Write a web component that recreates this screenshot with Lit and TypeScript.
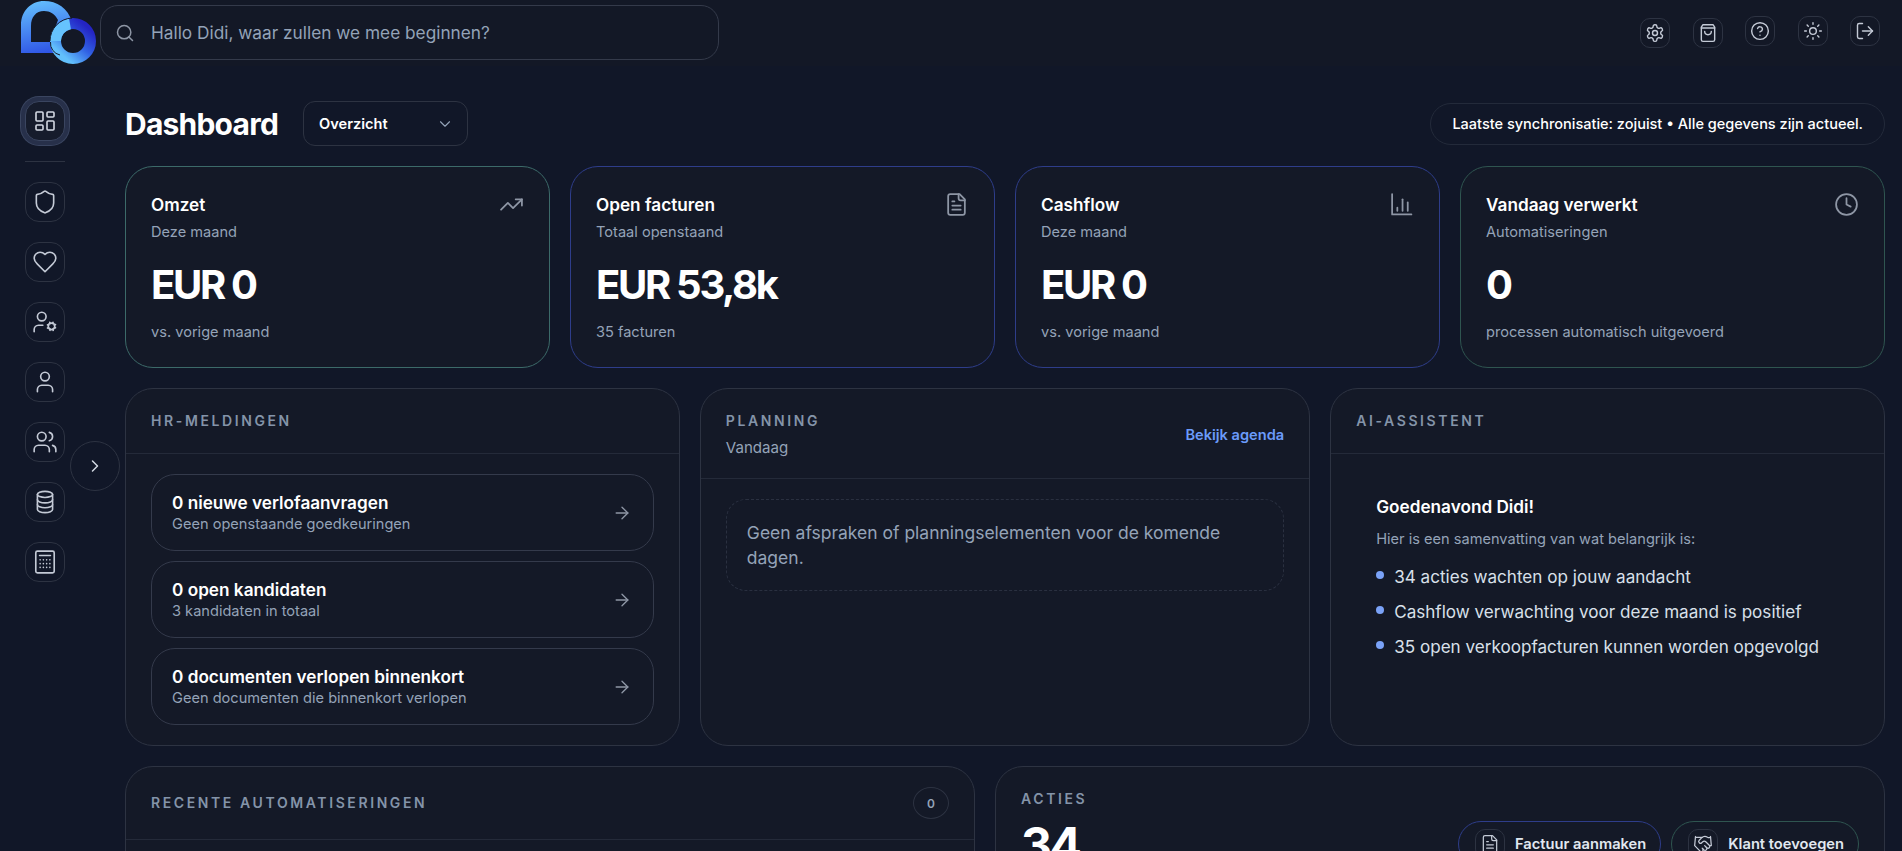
import { LitElement, css, html, svg } from "lit";
import { customElement } from "lit/decorators.js";

const icon = (body: unknown, size = 20, stroke = 2) => html`<svg
  width=${size}
  height=${size}
  viewBox="0 0 24 24"
  fill="none"
  stroke="currentColor"
  stroke-width=${stroke}
  stroke-linecap="round"
  stroke-linejoin="round"
>${body}</svg>`;

const I = {
  search: svg`<circle cx="11" cy="11" r="8"/><path d="m21 21-4.3-4.3"/>`,
  chevronDown: svg`<path d="m6 9 6 6 6-6"/>`,
  chevronRight: svg`<path d="m9 18 6-6-6-6"/>`,
  arrowRight: svg`<path d="M5 12h14"/><path d="m12 5 7 7-7 7"/>`,
  gear: svg`<path d="M12.22 2h-.44a2 2 0 0 0-2 2v.18a2 2 0 0 1-1 1.73l-.43.25a2 2 0 0 1-2 0l-.15-.08a2 2 0 0 0-2.73.73l-.22.38a2 2 0 0 0 .73 2.73l.15.1a2 2 0 0 1 1 1.72v.51a2 2 0 0 1-1 1.74l-.15.09a2 2 0 0 0-.73 2.73l.22.38a2 2 0 0 0 2.73.73l.15-.08a2 2 0 0 1 2 0l.43.25a2 2 0 0 1 1 1.73V20a2 2 0 0 0 2 2h.44a2 2 0 0 0 2-2v-.18a2 2 0 0 1 1-1.73l.43-.25a2 2 0 0 1 2 0l.15.08a2 2 0 0 0 2.73-.73l.22-.39a2 2 0 0 0-.73-2.73l-.15-.08a2 2 0 0 1-1-1.74v-.5a2 2 0 0 1 1-1.74l.15-.09a2 2 0 0 0 .73-2.73l-.22-.38a2 2 0 0 0-2.73-.73l-.15.08a2 2 0 0 1-2 0l-.43-.25a2 2 0 0 1-1-1.73V4a2 2 0 0 0-2-2z"/><circle cx="12" cy="12" r="3"/>`,
  bag: svg`<path d="M6 2 4 5v15a2 2 0 0 0 2 2h12a2 2 0 0 0 2-2V5l-2-3Z"/><path d="M4 6h16"/><path d="M16 10a4 4 0 0 1-8 0"/>`,
  help: svg`<circle cx="12" cy="12" r="10"/><path d="M9.09 9a3 3 0 0 1 5.83 1c0 2-3 3-3 3"/><path d="M12 17h.01"/>`,
  sun: svg`<circle cx="12" cy="12" r="4"/><path d="M12 2v2"/><path d="M12 20v2"/><path d="m4.93 4.93 1.41 1.41"/><path d="m17.66 17.66 1.41 1.41"/><path d="M2 12h2"/><path d="M20 12h2"/><path d="m6.34 17.66-1.41 1.41"/><path d="m19.07 4.93-1.41 1.41"/>`,
  logout: svg`<path d="M9 21H5a2 2 0 0 1-2-2V5a2 2 0 0 1 2-2h4"/><path d="m16 17 5-5-5-5"/><path d="M21 12H9"/>`,
  dashboard: svg`<rect x="3" y="3" width="7" height="9" rx="1"/><rect x="14" y="3" width="7" height="5" rx="1"/><rect x="14" y="12" width="7" height="9" rx="1"/><rect x="3" y="16" width="7" height="5" rx="1"/>`,
  shield: svg`<path d="M20 13c0 5-3.500 7.500-7.660 8.950a1 1 0 0 1-.67-.01C7.500 20.500 4 18 4 13V6a1 1 0 0 1 1-1c2 0 4.500-1.200 6.240-2.720a1.170 1.170 0 0 1 1.520 0C14.510 3.810 17 5 19 5a1 1 0 0 1 1 1z"/>`,
  heart: svg`<path d="M19 14c1.490-1.460 3-3.210 3-5.500A5.500 5.500 0 0 0 16.500 3c-1.760 0-3 .5-4.500 2-1.500-1.500-2.740-2-4.500-2A5.500 5.500 0 0 0 2 8.500c0 2.300 1.500 4.050 3 5.500l7 7Z"/>`,
  userCog: svg`<path d="M2 21v-2a4 4 0 0 1 4-4h4"/><circle cx="9" cy="7" r="4"/><circle cx="18" cy="16" r="3"/><path d="m21.700 17.400-.9-.3"/><path d="m15.200 14.900-.9-.3"/><path d="m16.600 19.700.3-.9"/><path d="m19.100 13.200.3-.9"/><path d="m19.600 19.700-.4-1"/><path d="m16.800 13.300-.4-1"/><path d="m14.300 17.600 1-.4"/><path d="m20.700 14.800 1-.4"/>`,
  user: svg`<path d="M19 21v-2a4 4 0 0 0-4-4H9a4 4 0 0 0-4 4v2"/><circle cx="12" cy="7" r="4"/>`,
  users: svg`<path d="M16 21v-2a4 4 0 0 0-4-4H6a4 4 0 0 0-4 4v2"/><circle cx="9" cy="7" r="4"/><path d="M22 21v-2a4 4 0 0 0-3-3.870"/><path d="M16 3.130a4 4 0 0 1 0 7.750"/>`,
  database: svg`<ellipse cx="12" cy="5" rx="7" ry="2.800"/><path d="M5 5v14c0 1.500 3.100 2.800 7 2.800s7-1.300 7-2.800V5"/><path d="M5 10c0 1.500 3.100 2.800 7 2.800s7-1.300 7-2.800"/><path d="M5 14.500c0 1.500 3.100 2.800 7 2.800s7-1.300 7-2.800"/>`,
  calculator: svg`<rect x="3.500" y="2" width="17" height="20" rx="1.500"/><path d="M7 6h10"/><path d="M7.500 10h.01M10.500 10h.01M13.500 10h.01M16.500 10h.01M7.500 13.500h.01M10.500 13.500h.01M13.500 13.500h.01M16.500 13.500h.01M7.500 17h.01M10.500 17h.01M13.500 17h.01M16.500 17h.01"/>`,
  trending: svg`<path d="M22 7l-8.500 8.500-5-5L2 17"/><path d="M16 7h6v6"/>`,
  file: svg`<path d="M15 2H6a2 2 0 0 0-2 2v16a2 2 0 0 0 2 2h12a2 2 0 0 0 2-2V7Z"/><path d="M14 2v4a2 2 0 0 0 2 2h4"/><path d="M10 9H8"/><path d="M16 13H8"/><path d="M16 17H8"/>`,
  chart: svg`<path d="M3 2v19.500h18.500"/><path d="M8 18v-3"/><path d="M13 18V7"/><path d="M18 18v-8"/>`,
  clock: svg`<circle cx="12" cy="12" r="10"/><path d="M12 6v6l4 2"/>`,
  handshake: svg`<path d="m11 17 2 2a1 1 0 1 0 3-3"/><path d="m14 14 2.500 2.500a1 1 0 1 0 3-3l-3.880-3.880a3 3 0 0 0-4.240 0l-.88.88a1 1 0 1 1-3-3l2.810-2.810a5.790 5.790 0 0 1 7.060-.87l.47.28a2 2 0 0 0 1.420.25L21 4"/><path d="m21 3 1 11h-2"/><path d="M3 3 2 14l6.500 6.500a1 1 0 1 0 3-3"/><path d="M3 4h8"/>`,
};

const kpis = [
  { title: "Omzet", sub: "Deze maand", value: "EUR 0", foot: "vs. vorige maand", tone: "teal", icon: I.trending },
  { title: "Open facturen", sub: "Totaal openstaand", value: "EUR 53,8k", foot: "35 facturen", tone: "blue", icon: I.file },
  { title: "Cashflow", sub: "Deze maand", value: "EUR 0", foot: "vs. vorige maand", tone: "blue", icon: I.chart },
  { title: "Vandaag verwerkt", sub: "Automatiseringen", value: "0", foot: "processen automatisch uitgevoerd", tone: "green", icon: I.clock },
];

const hrItems = [
  { title: "0 nieuwe verlofaanvragen", sub: "Geen openstaande goedkeuringen" },
  { title: "0 open kandidaten", sub: "3 kandidaten in totaal" },
  { title: "0 documenten verlopen binnenkort", sub: "Geen documenten die binnenkort verlopen" },
];

const bullets = [
  "34 acties wachten op jouw aandacht",
  "Cashflow verwachting voor deze maand is positief",
  "35 open verkoopfacturen kunnen worden opgevolgd",
];

const navItems = [I.shield, I.heart, I.userCog, I.user, I.users, I.database, I.calculator];

@customElement("app-root")
export class AppRoot extends LitElement {
  render() {
    return html`
      <header class="topbar">
        <svg class="logo" width="76" height="65" viewBox="20 0 76 65">
          <defs>
            <linearGradient id="dg" x1="0.3" y1="0" x2="0.5" y2="1">
              <stop offset="0" stop-color="#63bdfd" />
              <stop offset="1" stop-color="#2f55e6" />
            </linearGradient>
            <linearGradient id="rg" x1="0.9" y1="0.1" x2="0.2" y2="0.9">
              <stop offset="0" stop-color="#2424c4" />
              <stop offset="0.5" stop-color="#3162e4" />
              <stop offset="1" stop-color="#62c0fc" />
            </linearGradient>
          </defs>
          <path
            fill="url(#dg)"
            fill-rule="evenodd"
            d="M21 53V25C21 11 31 1 44 1C57 1 68 8 72 22L62 30L60 42L54 53ZM31 42V26C31 17 36 11 44 11C50 11 55 14 58 20L50 42Z"
          />
          <circle cx="73" cy="41" r="17.500" fill="none" stroke="url(#rg)" stroke-width="11" />
          <path d="M55.500 41A17.500 17.500 0 0 1 70 23.800" fill="none" stroke="#66c3fd" stroke-width="11" />
          <path d="M50 41A23 23 0 0 1 72 18" fill="none" stroke="#141927" stroke-width="1" />
          <path d="M50.500 42A12 12 0 0 0 60 55" fill="none" stroke="#141927" stroke-width="1" />
        </svg>
        <div class="search">
          <span class="search-icon">${icon(I.search, 20, 1.800)}</span>
          <span>Hallo Didi, waar zullen we mee beginnen?</span>
        </div>
        <div class="top-actions">
          <span class="top-btn low">${icon(I.gear, 20, 1.700)}</span>
          <span class="top-btn low">${icon(I.bag, 20, 1.700)}</span>
          <span class="top-btn">${icon(I.help, 20, 1.700)}</span>
          <span class="top-btn">${icon(I.sun, 20, 1.700)}</span>
          <span class="top-btn">${icon(I.logout, 20, 1.700)}</span>
        </div>
      </header>

      <div class="layout">
        <nav class="sidebar">
          <span class="nav-btn active">${icon(I.dashboard, 24, 1.600)}</span>
          <div class="nav-sep"></div>
          ${navItems.map((n) => html`<span class="nav-btn">${icon(n, 26, 1.500)}</span>`)}
          <span class="toggle">${icon(I.chevronRight, 20, 1.800)}</span>
        </nav>

        <main class="main">
          <div class="page-head">
            <h1>Dashboard</h1>
            <div class="select">
              <span>Overzicht</span>
              <span class="select-icon">${icon(I.chevronDown, 18, 1.500)}</span>
            </div>
            <div class="sync">Laatste synchronisatie: zojuist • Alle gegevens zijn actueel.</div>
          </div>

          <section class="kpis">
            ${kpis.map(
              (k) => html`
                <article class="kpi ${k.tone}">
                  <div class="kpi-top">
                    <div class="kpi-title">${k.title}</div>
                    <span class="kpi-icon">${icon(k.icon, 25, 1.700)}</span>
                  </div>
                  <div class="kpi-sub">${k.sub}</div>
                  <div class="kpi-value">${k.value}</div>
                  <div class="kpi-foot">${k.foot}</div>
                </article>
              `,
            )}
          </section>

          <section class="row-mid">
            <article class="panel">
              <div class="panel-head"><h2>HR-meldingen</h2></div>
              <div class="hr-list">
                ${hrItems.map(
                  (h) => html`
                    <div class="hr-item">
                      <div>
                        <div class="hr-title">${h.title}</div>
                        <div class="hr-sub">${h.sub}</div>
                      </div>
                      <span class="hr-arrow">${icon(I.arrowRight, 20, 1.600)}</span>
                    </div>
                  `,
                )}
              </div>
            </article>

            <article class="panel">
              <div class="panel-head between plan">
                <div>
                  <h2>Planning</h2>
                  <div class="panel-sub">Vandaag</div>
                </div>
                <a class="link">Bekijk agenda</a>
              </div>
              <div class="plan-body">
                <div class="empty">Geen afspraken of planningselementen voor de komende dagen.</div>
              </div>
            </article>

            <article class="panel">
              <div class="panel-head"><h2>AI-assistent</h2></div>
              <div class="ai-body">
                <div class="ai-title">Goedenavond Didi!</div>
                <div class="ai-intro">Hier is een samenvatting van wat belangrijk is:</div>
                <ul>
                  ${bullets.map((b) => html`<li>${b}</li>`)}
                </ul>
              </div>
            </article>
          </section>

          <section class="row-low">
            <article class="panel tall">
              <div class="panel-head between slim">
                <h2>Recente automatiseringen</h2>
                <span class="count">0</span>
              </div>
            </article>
            <article class="panel tall actions">
              <div class="actions-left">
                <h2>Acties</h2>
                <div class="actions-num">34</div>
              </div>
              <div class="action-btns">
                <span class="action blue">
                  <span class="chip">${icon(I.file, 20, 1.500)}</span>Factuur aanmaken
                </span>
                <span class="action green">
                  <span class="chip">${icon(I.handshake, 20, 1.500)}</span>Klant toevoegen
                </span>
              </div>
            </article>
          </section>
        </main>
      </div>
    `;
  }

  static styles = css`
    :host {
      display: block;
      height: 851px;
      overflow: hidden;
      background: #111728;
      color: #fff;
      font-family: Inter, "Liberation Sans", sans-serif;
    }

    h1,
    h2,
    ul {
      margin: 0;
      padding: 0;
    }

    svg {
      display: block;
    }

    .topbar {
      display: flex;
      align-items: flex-start;
      height: 66px;
      padding: 0 22px 0 20px;
      box-sizing: border-box;
      background: #131826;
    }

    .logo {
      flex: none;
      margin-right: 4px;
    }

    .search {
      display: flex;
      align-items: center;
      gap: 16px;
      width: 619px;
      height: 55px;
      margin-top: 5px;
      padding: 0 14px;
      box-sizing: border-box;
      border: 1px solid #343a4a;
      border-radius: 18px;
      color: #94a3b8;
      font-size: 17.250px;
    }

    .search-icon {
      color: #8e96a5;
    }

    .top-actions {
      display: flex;
      align-items: flex-start;
      gap: 22.500px;
      margin-left: auto;
      margin-top: 16px;
    }

    .top-btn {
      display: flex;
      align-items: center;
      justify-content: center;
      width: 30px;
      height: 30px;
      box-sizing: border-box;
      border: 1px solid #2d3342;
      border-radius: 10px;
      color: #c4cad6;
    }

    .top-btn.low {
      margin-top: 2px;
    }

    .layout {
      position: relative;
      display: flex;
    }

    .sidebar {
      position: relative;
      display: flex;
      flex-direction: column;
      align-items: center;
      flex: none;
      width: 90px;
      padding-top: 35px;
      gap: 20px;
      box-sizing: border-box;
    }

    .nav-btn {
      display: flex;
      align-items: center;
      justify-content: center;
      width: 40px;
      height: 40px;
      box-sizing: border-box;
      border: 1px solid #2d3342;
      border-radius: 14px;
      color: #c4cad6;
    }

    .nav-btn.active {
      background: #161c2c;
      border-color: #3a4560;
      box-shadow: 0 0 0 4px #27304a, 0 0 0 5px #3a4560;
      color: #d4d9e3;
    }

    .nav-sep {
      width: 40px;
      height: 1px;
      background: #2d3342;
    }

    .toggle {
      position: absolute;
      left: 70px;
      top: 375px;
      display: flex;
      align-items: center;
      justify-content: center;
      width: 50px;
      height: 50px;
      box-sizing: border-box;
      border: 1px solid #2d3342;
      border-radius: 50%;
      background: #111728;
      color: #d4d9e3;
    }

    .main {
      flex: 1;
      display: flex;
      flex-direction: column;
      gap: 20px;
      min-width: 0;
      padding: 35px 17px 0 35px;
    }

    .page-head {
      display: flex;
      align-items: center;
      height: 45px;
    }

    h1 {
      font-size: 30px;
      font-weight: 700;
      letter-spacing: -0.770px;
      margin-right: 25px;
    }

    .select {
      display: flex;
      align-items: center;
      justify-content: space-between;
      width: 165px;
      height: 45px;
      padding: 0 13px 0 15px;
      box-sizing: border-box;
      border: 1px solid #2d3342;
      border-radius: 12px;
      font-size: 14.600px;
      font-weight: 600;
    }

    .select-icon {
      color: #94a3b8;
    }

    .sync {
      margin-left: auto;
      display: flex;
      align-items: center;
      height: 42px;
      padding: 0 21px;
      box-sizing: border-box;
      border: 1px solid #232a3a;
      border-radius: 21px;
      font-size: 14.520px;
      font-weight: 500;
      white-space: nowrap;
    }

    .kpis {
      display: grid;
      grid-template-columns: repeat(4, 1fr);
      gap: 20px;
    }

    .kpi {
      height: 202px;
      padding: 27px 25px 25px;
      box-sizing: border-box;
      border: 1px solid #2d3342;
      border-radius: 28px;
      background: #141927;
    }

    .kpi.teal {
      border-color: #3c6a69;
    }
    .kpi.blue {
      border-color: #2e3d8a;
    }
    .kpi.green {
      border-color: #2f5550;
    }

    .kpi-top {
      display: flex;
      align-items: center;
      justify-content: space-between;
      height: 20px;
    }

    .kpi-title {
      font-size: 17.200px;
      font-weight: 600;
    }

    .kpi-icon {
      color: #8e96a5;
    }

    .kpi-sub,
    .kpi-foot {
      color: #94a3b8;
      font-size: 14.600px;
      line-height: 20px;
    }

    .kpi-sub {
      margin-top: 8px;
    }

    .kpi-value {
      margin-top: 19px;
      font-size: 40px;
      line-height: 48px;
      font-weight: 700;
      letter-spacing: -2.300px;
    }

    .kpi-foot {
      margin-top: 13px;
    }

    .row-mid {
      display: grid;
      grid-template-columns: 1fr 1.100fr 1fr;
      gap: 20px;
    }

    .row-low {
      display: grid;
      grid-template-columns: 850fr 890fr;
      gap: 20px;
    }

    .panel {
      box-sizing: border-box;
      border: 1px solid #2d3342;
      border-radius: 28px;
      background: #141927;
      overflow: hidden;
    }

    .panel.tall {
      min-height: 200px;
    }

    .panel-head {
      padding: 24px 25px;
      border-bottom: 1px solid #242a39;
    }

    .panel-head.between {
      display: flex;
      align-items: center;
      justify-content: space-between;
    }

    .panel-head.plan {
      padding-bottom: 21px;
    }

    .panel-head.slim {
      padding: 20px 25px;
      height: 73px;
      box-sizing: border-box;
    }

    h2 {
      color: #8494a9;
      font-size: 14px;
      line-height: 16px;
      font-weight: 600;
      letter-spacing: 2.600px;
      text-transform: uppercase;
    }

    .panel-sub {
      margin-top: 10px;
      color: #94a3b8;
      font-size: 15.100px;
      line-height: 18px;
    }

    .link {
      color: #6b9bfa;
      font-size: 14.600px;
      font-weight: 600;
    }

    .hr-list {
      display: flex;
      flex-direction: column;
      gap: 10px;
      padding: 20px 25px;
    }

    .hr-item {
      display: flex;
      align-items: center;
      justify-content: space-between;
      height: 77px;
      padding: 0 21px 0 20px;
      box-sizing: border-box;
      border: 1px solid #343a4b;
      border-radius: 24px;
    }

    .hr-title {
      font-size: 17.200px;
      font-weight: 600;
      line-height: 22px;
    }

    .hr-sub {
      color: #94a3b8;
      font-size: 14.600px;
      line-height: 20px;
    }

    .hr-arrow {
      color: #8e96a5;
    }

    .plan-body {
      padding: 20px 25px;
    }

    .empty {
      padding: 20px;
      border: 1px dashed #2a3040;
      border-radius: 20px;
      color: #94a3b8;
      font-size: 17.500px;
      line-height: 25px;
    }

    .ai-body {
      padding: 44px 45px;
    }

    .ai-title {
      font-size: 17.200px;
      font-weight: 600;
      line-height: 18px;
      margin-bottom: 12px;
    }

    .ai-intro {
      color: #94a3b8;
      font-size: 14.600px;
      line-height: 22px;
      margin-bottom: 15px;
    }

    ul {
      display: flex;
      flex-direction: column;
      gap: 11px;
      list-style: none;
    }

    li {
      position: relative;
      padding-left: 18px;
      color: #d9e0ea;
      font-size: 17.100px;
      line-height: 24px;
    }

    li::before {
      content: "";
      position: absolute;
      left: 0;
      top: 6px;
      width: 8px;
      height: 8px;
      border-radius: 50%;
      background: #7aa2f7;
    }

    .count {
      display: flex;
      align-items: center;
      justify-content: center;
      width: 36px;
      height: 32px;
      box-sizing: border-box;
      border: 1px solid #2d3342;
      border-radius: 50%;
      color: #94a3b8;
      font-size: 12px;
      font-weight: 600;
    }

    .actions {
      display: flex;
      justify-content: space-between;
      align-items: flex-start;
      padding: 24px 25px;
    }

    .actions-num {
      margin-top: 14px;
      font-size: 48px;
      line-height: 48px;
      font-weight: 700;
      letter-spacing: -2.500px;
    }

    .action-btns {
      display: flex;
      gap: 10px;
      margin-top: 30px;
    }

    .action {
      display: flex;
      align-items: center;
      gap: 10px;
      height: 46px;
      padding: 0 14px 0 16px;
      box-sizing: border-box;
      border: 1px solid #2d3342;
      border-radius: 23px;
      color: #e2e8f0;
      font-size: 14.700px;
      font-weight: 600;
      white-space: nowrap;
    }

    .action.blue {
      border-color: #2e3d8a;
    }
    .action.green {
      border-color: #2f5550;
    }

    .chip {
      display: flex;
      align-items: center;
      justify-content: center;
      width: 30px;
      height: 30px;
      box-sizing: border-box;
      border: 1px solid #2d3342;
      border-radius: 10px;
      color: #c4cad6;
    }
  `;
}
